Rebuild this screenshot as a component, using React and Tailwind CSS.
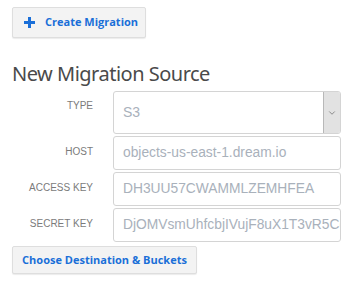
import { ChevronDown } from "lucide-react";

const fields = [
  { label: "HOST", value: "objects-us-east-1.dream.io" },
  { label: "ACCESS KEY", value: "DH3UU57CWAMMLZEMHFEA" },
  { label: "SECRET KEY", value: "DjOMVsmUhfcbjIVujF8uX1T3vR5Cq" },
];

const App = () => {
  return (
    <div className="w-[350px] h-[288px] bg-white pl-3 pt-[7px] font-['Open_Sans',sans-serif]">
      {/* top action */}
      <button className="flex items-center h-[31px] w-[134px] pl-[11px] bg-[#f3f3f3] border border-[#dedede] rounded-[2px] shadow-[0_1px_1px_rgba(0,0,0,0.08)] text-[#1a6fd8] text-[11px] font-bold">
        <svg width="11" height="11" viewBox="0 0 11 11" className="mr-[10px]">
          <rect x="4" y="0" width="3" height="11" fill="currentColor" />
          <rect x="0" y="4" width="11" height="3" fill="currentColor" />
        </svg>
        <span>Create Migration</span>
      </button>

      <h2 className="mt-[24px] text-[20px] leading-[24px] text-[#4a4a4a] font-['Noto_Sans',sans-serif] tracking-[-0.5px]">
        New Migration Source
      </h2>

      <div className="mt-[5px] flex flex-col gap-[2px] font-['Liberation_Sans',sans-serif]">
        {/* type select */}
        <div className="flex">
          <div className="w-[81px] pt-[7px] text-right text-[10px] text-[#7b7b7b]">TYPE</div>
          <div className="ml-[20px] flex w-[228px] h-[43px] border border-[#d4d4d4] rounded-[3px] overflow-hidden">
            <div className="flex-1 flex items-center pl-[9px] text-[14px] text-[#a9b1bb]">S3</div>
            <div className="w-[17px] flex items-center justify-center bg-[#e2e2e2] border-l border-[#b8b8b8]">
              <ChevronDown size={10} strokeWidth={1.5} className="text-[#555]" />
            </div>
          </div>
        </div>

        {fields.map((f) => (
          <div key={f.label} className="flex">
            <div className="w-[81px] pt-[8px] text-right text-[10px] text-[#7b7b7b] whitespace-nowrap">
              {f.label}
            </div>
            <div className="ml-[20px] w-[228px] h-[34px] border border-[#d4d4d4] rounded-[3px] flex items-center pl-[9px] overflow-hidden whitespace-nowrap text-[13.8px] text-[#a9b1bb]">
              {f.value}
            </div>
          </div>
        ))}
      </div>

      <button className="mt-[4px] h-[28px] w-[185px] bg-[#f3f3f3] border border-[#dedede] rounded-[2px] shadow-[0_1px_1px_rgba(0,0,0,0.08)] text-[#1a6fd8] text-[11px] font-bold font-['Open_Sans',sans-serif]">
        Choose Destination &amp; Buckets
      </button>
    </div>
  );
};

export default App;
